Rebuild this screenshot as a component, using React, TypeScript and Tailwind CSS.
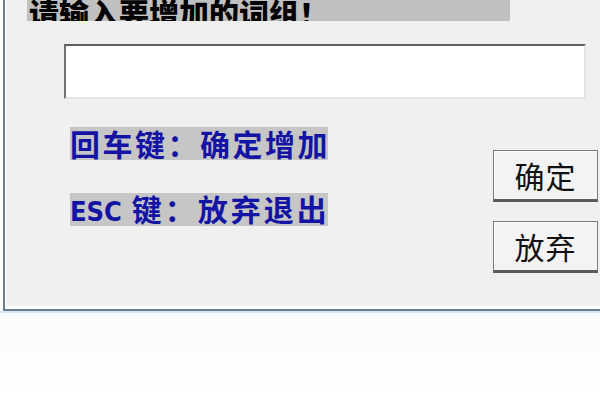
import React from "react";

const cjk = "font-['Noto_Sans_CJK_SC','Noto_Sans',sans-serif]";

const Hint = ({ children, wide }: { children: React.ReactNode; wide?: boolean }) => (
  <div className="w-[258px] h-[33px] bg-[#c6c6c6] flex items-center">
    <span
      className={`text-[30px] leading-[33px] font-bold text-[#1414a4] whitespace-nowrap ${
        wide ? "tracking-[3px]" : "tracking-[2.5px]"
      }`}
    >
      {children}
    </span>
  </div>
);

const Btn = ({ label }: { label: string }) => (
  <button className="w-[105px] h-[52px] flex items-center justify-center border border-[#7a7a7a] border-b-[3px] border-b-[#5a5a5a] bg-[#f3f3f3] shadow-[inset_1px_1px_0_#ffffff] text-[30px] leading-none text-[#111] tracking-[1px]">
    {label}
  </button>
);

const App: React.FC = () => {
  return (
    <div className={`w-[600px] h-[400px] bg-white overflow-hidden flex flex-col ${cjk}`}>
      {/* dialog body */}
      <div className="h-[311px] ml-[3px] border-l-2 border-b-2 border-[#6e7e8e] bg-[#f0f0f0] shadow-[inset_2px_-3px_0_#fbfbfb] flex flex-col">
        <div className="ml-[22px] w-[483px] h-[21px] bg-[#c0c0c0] overflow-hidden flex items-end">
          <span className="ml-[2px] text-[30px] leading-[26px] font-black text-black whitespace-nowrap translate-y-[4px]">
            请输入要增加的词组！
          </span>
        </div>

        <input
          className="mt-[23px] ml-[59px] w-[522px] h-[55px] bg-white outline-none border-2 border-t-[#606060] border-l-[#707070] border-r-[#e4e4e4] border-b-[#e4e4e4]"
          type="text"
        />

        <div className="flex items-start mt-[28px]">
          <div className="ml-[65px] flex flex-col gap-[33px]">
            <Hint>回车键：确定增加</Hint>
            <Hint wide>
              <span className="text-[27px] tracking-[0px] font-['DejaVu_Sans_Condensed','Liberation_Sans',sans-serif]">ESC</span>{" "}
              键：放弃退出
            </Hint>
          </div>
          <div className="ml-auto mr-[2px] mt-[23px] flex flex-col gap-[19px]">
            <Btn label="确定" />
            <Btn label="放弃" />
          </div>
        </div>
      </div>
      <div className="h-[2px] bg-[#d6e5f3]" />
      <div className="flex-1 bg-gradient-to-b from-[#f9fafb] to-white" />
    </div>
  );
};

export default App;
